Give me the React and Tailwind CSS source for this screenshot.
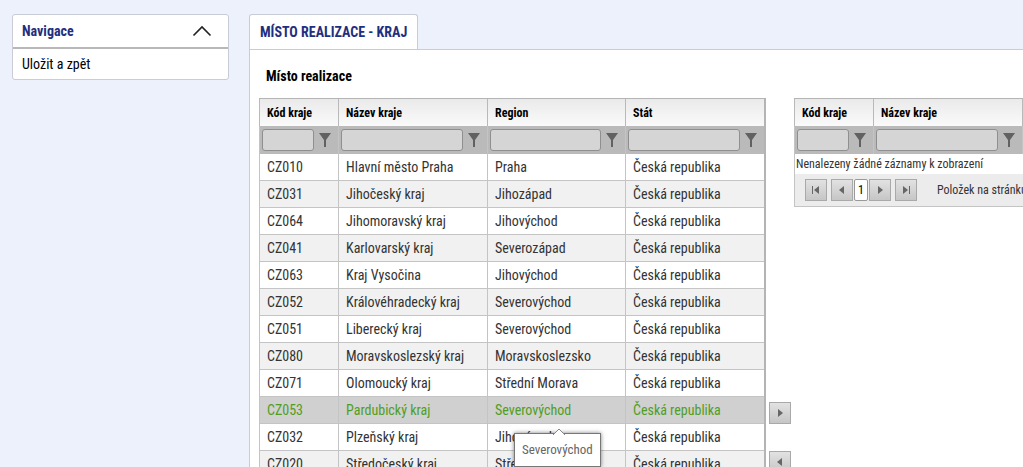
import clsx from 'clsx';

const regions = [
  { code: 'CZ010', name: 'Hlavní město Praha', region: 'Praha' },
  { code: 'CZ031', name: 'Jihočeský kraj', region: 'Jihozápad' },
  { code: 'CZ064', name: 'Jihomoravský kraj', region: 'Jihovýchod' },
  { code: 'CZ041', name: 'Karlovarský kraj', region: 'Severozápad' },
  { code: 'CZ063', name: 'Kraj Vysočina', region: 'Jihovýchod' },
  { code: 'CZ052', name: 'Královéhradecký kraj', region: 'Severovýchod' },
  { code: 'CZ051', name: 'Liberecký kraj', region: 'Severovýchod' },
  { code: 'CZ080', name: 'Moravskoslezský kraj', region: 'Moravskoslezsko' },
  { code: 'CZ071', name: 'Olomoucký kraj', region: 'Střední Morava' },
  { code: 'CZ053', name: 'Pardubický kraj', region: 'Severovýchod' },
  { code: 'CZ032', name: 'Plzeňský kraj', region: 'Jihozápad' },
  { code: 'CZ020', name: 'Středočeský kraj', region: 'Střední Čechy' },
];

const selectedCode = 'CZ053';

const columns = [
  { label: 'Kód kraje', width: 'w-[79px]' },
  { label: 'Název kraje', width: 'w-[149px]' },
  { label: 'Region', width: 'w-[138px]' },
  { label: 'Stát', width: 'w-[139px]' },
];

const icons = {
  first: 'M2 2h1v8H2zM9 2v8L4 6z',
  prev: 'M8 2v8L3 6z',
  next: 'M4 2v8l5-4z',
  last: 'M9 2h1v8H9zM3 2v8l5-4z',
};

function IconButton({ icon, label }) {
  return (
    <button
      type="button"
      aria-label={label}
      className="flex h-[22px] w-[22px] shrink-0 items-center justify-center border border-[#a9a9a9] bg-linear-to-b from-[#e2e2e2] to-[#c6c6c6]"
    >
      <svg viewBox="0 0 12 12" className="h-3 w-3 fill-[#666]">
        <path d={icons[icon]} />
      </svg>
    </button>
  );
}

function FilterIcon() {
  return (
    <svg viewBox="0 0 12 16" className="h-4 w-3 shrink-0 fill-[#616161]">
      <path d="M0 1h12L7 8v7H5V8z" />
    </svg>
  );
}

function GridHead({ gridName }) {
  return (
    <thead>
      <tr className="h-[27px] bg-linear-to-b from-[#eaeaea] to-[#fafafa] text-[12px]">
        {columns.map((col) => (
          <th
            key={col.label}
            className={clsx(col.width, 'border-l border-[#b9b9b9] px-[7px] text-left font-bold text-black')}
          >
            {col.label}
          </th>
        ))}
      </tr>
      <tr className="h-[28px] bg-[#bababa]">
        {columns.map((col) => (
          <td key={col.label} className="border-l border-[#c4c4c4] py-0 pr-[7px] pl-[2px]">
            <div className="flex items-center gap-[5px]">
              <input
                type="text"
                aria-label={`${gridName}: ${col.label}`}
                className="h-[22px] min-w-0 flex-1 rounded-[3px] border border-[#8f8f8f] bg-[#d5d5d5] px-1"
              />
              <button type="button" aria-label={`Filtr ${col.label}`}>
                <FilterIcon />
              </button>
            </div>
          </td>
        ))}
      </tr>
    </thead>
  );
}

function Tooltip({ text }) {
  return (
    <div className="absolute top-full left-[26px] z-10 mt-[10px] border border-[#777] bg-white px-[7px] py-[7px] text-[13px] leading-[18px] text-[#666] shadow-[0_0_4px_rgba(0,0,0,0.5)]">
      <svg viewBox="0 0 12 7" className="absolute -top-[6px] left-[38px] h-[7px] w-3">
        <path d="M0 7L6 1l6 6" fill="#fff" stroke="#888" />
      </svg>
      {text}
    </div>
  );
}

function AvailableGrid() {
  return (
    <table className="w-[507px] shrink-0 table-fixed border-separate border-spacing-0 border-t border-r-2 border-[#b4b4b4]">
      <GridHead gridName="Místo realizace" />
      <tbody>
        {regions.map((row) => {
          const selected = row.code === selectedCode;
          return (
            <tr
              key={row.code}
              className={clsx(
                'h-[27px] text-[14px] leading-5',
                selected ? 'bg-[#d0d0d0] text-[#4f9e22]' : 'text-[#333] even:bg-[#f1f1f1]'
              )}
            >
              <td className="border-b border-l border-[#c4c4c4] px-[7px]">{row.code}</td>
              <td className="border-b border-l border-[#c4c4c4] px-[7px] whitespace-nowrap">{row.name}</td>
              <td className="relative border-b border-l border-[#c4c4c4] px-[7px] whitespace-nowrap">
                {row.region}
                {selected && <Tooltip text={row.region} />}
              </td>
              <td className="border-b border-l border-[#c4c4c4] px-[7px]">Česká republika</td>
            </tr>
          );
        })}
      </tbody>
    </table>
  );
}

function SelectedGrid() {
  return (
    <div className="w-[507px] shrink-0 border-b border-[#c4c4c4] text-[12px]">
      <table className="w-full table-fixed border-separate border-spacing-0 border-t border-r-2 border-[#b4b4b4]">
        <GridHead gridName="Vybrané" />
        <tbody>
          <tr className="h-[20px] leading-4 text-[#333]">
            <td colSpan={4} className="border-l border-[#c4c4c4] px-px">
              Nenalezeny žádné záznamy k zobrazení
            </td>
          </tr>
        </tbody>
      </table>
      <div className="flex h-[32px] items-center border-l border-[#c4c4c4] bg-[#ececec] pl-[10px] text-[#333]">
        <IconButton icon="first" label="První stránka" />
        <div className="ml-1 flex items-center gap-px">
          <IconButton icon="prev" label="Předchozí stránka" />
          <button type="button" className="h-[22px] w-[14px] rounded-[2px] border border-[#999] bg-white text-[12px] text-black">
            1
          </button>
          <IconButton icon="next" label="Další stránka" />
        </div>
        <div className="ml-1">
          <IconButton icon="last" label="Poslední stránka" />
        </div>
        <span className="ml-5 whitespace-nowrap">Položek na stránku</span>
      </div>
    </div>
  );
}

export default function App() {
  return (
    <div className="flex h-screen items-start gap-5 overflow-hidden bg-[#edf1fc] pt-[14px] pl-3 font-['Roboto_Condensed','Liberation_Sans_Narrow',Roboto,sans-serif]">
      <nav className="w-[217px] shrink-0 rounded-[3px] border border-[#c9ccd6] bg-white text-[14px] leading-5">
        <button
          type="button"
          className="flex h-[34px] w-full items-center justify-between border-b-2 border-[#b8b8b8] pr-4 pl-[9px] font-bold text-[#1f2f80]"
        >
          Navigace
          <svg viewBox="0 0 20 12" className="h-3 w-5" fill="none" stroke="#222" strokeWidth="1.6">
            <path d="M1.500 10.500L10 2l8.500 8.500" />
          </svg>
        </button>
        <a href="#zpet" className="flex h-[30px] items-center pl-[9px] text-black">
          Uložit a zpět
        </a>
      </nav>

      <main className="flex min-w-0 flex-1 flex-col items-start">
        <button
          type="button"
          className="h-[35px] rounded-t-[3px] border border-b-0 border-[#c9ccd6] bg-white px-[10px] text-[14px] font-bold whitespace-nowrap text-[#1f2f80]"
        >
          MÍSTO REALIZACE - KRAJ
        </button>
        <section className="w-full overflow-hidden border-t border-l border-[#c9ccd6] bg-white px-[9px] pt-4">
          <h1 className="mb-3 pl-[7px] text-[14px] leading-5 font-bold text-black">Místo realizace</h1>
          <div className="flex items-start">
            <AvailableGrid />
            <div className="mx-[3px] flex flex-col gap-[27px] pt-[304px]">
              <IconButton icon="next" label="Přidat" />
              <IconButton icon="prev" label="Odebrat" />
            </div>
            <SelectedGrid />
          </div>
        </section>
      </main>
    </div>
  );
}
